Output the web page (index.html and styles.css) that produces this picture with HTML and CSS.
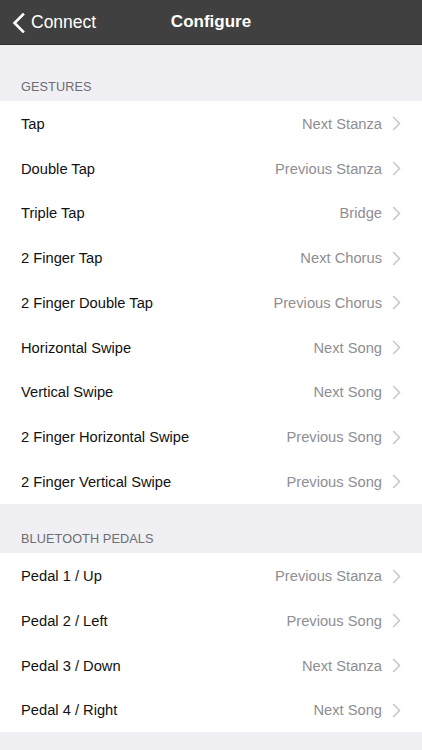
FILE: index.html
```html
<!DOCTYPE html>
<html>
<head>
<meta charset="utf-8">
<link rel="stylesheet" href="styles.css">
</head>
<body>
<div class="app">
  <header class="navbar">
    <div class="back">
      <svg class="back-icon" width="13" height="20" viewBox="0 0 13 20"><path d="M11 1.5 L2.5 10 L11 18.5" fill="none" stroke="#fff" stroke-width="2.6" stroke-linecap="square"/></svg>
      <span class="back-text">Connect</span>
    </div>
    <div class="title">Configure</div>
  </header>
  <div class="section-head first">GESTURES</div>
  <div class="group">
    <div class="row"><span class="label">Tap</span><span class="value">Next Stanza</span><svg class="chev" width="9" height="15" viewBox="0 0 9 15"><path d="M1.2 1 L7.5 7.5 L1.2 14" fill="none" stroke="#c7c7cc" stroke-width="1.6"/></svg></div>
    <div class="row"><span class="label">Double Tap</span><span class="value">Previous Stanza</span><svg class="chev" width="9" height="15" viewBox="0 0 9 15"><path d="M1.2 1 L7.5 7.5 L1.2 14" fill="none" stroke="#c7c7cc" stroke-width="1.6"/></svg></div>
    <div class="row"><span class="label">Triple Tap</span><span class="value">Bridge</span><svg class="chev" width="9" height="15" viewBox="0 0 9 15"><path d="M1.2 1 L7.5 7.5 L1.2 14" fill="none" stroke="#c7c7cc" stroke-width="1.6"/></svg></div>
    <div class="row"><span class="label">2 Finger Tap</span><span class="value">Next Chorus</span><svg class="chev" width="9" height="15" viewBox="0 0 9 15"><path d="M1.2 1 L7.5 7.5 L1.2 14" fill="none" stroke="#c7c7cc" stroke-width="1.6"/></svg></div>
    <div class="row"><span class="label">2 Finger Double Tap</span><span class="value">Previous Chorus</span><svg class="chev" width="9" height="15" viewBox="0 0 9 15"><path d="M1.2 1 L7.5 7.5 L1.2 14" fill="none" stroke="#c7c7cc" stroke-width="1.6"/></svg></div>
    <div class="row"><span class="label">Horizontal Swipe</span><span class="value">Next Song</span><svg class="chev" width="9" height="15" viewBox="0 0 9 15"><path d="M1.2 1 L7.5 7.5 L1.2 14" fill="none" stroke="#c7c7cc" stroke-width="1.6"/></svg></div>
    <div class="row"><span class="label">Vertical Swipe</span><span class="value">Next Song</span><svg class="chev" width="9" height="15" viewBox="0 0 9 15"><path d="M1.2 1 L7.5 7.5 L1.2 14" fill="none" stroke="#c7c7cc" stroke-width="1.6"/></svg></div>
    <div class="row"><span class="label">2 Finger Horizontal Swipe</span><span class="value">Previous Song</span><svg class="chev" width="9" height="15" viewBox="0 0 9 15"><path d="M1.2 1 L7.5 7.5 L1.2 14" fill="none" stroke="#c7c7cc" stroke-width="1.6"/></svg></div>
    <div class="row"><span class="label">2 Finger Vertical Swipe</span><span class="value">Previous Song</span><svg class="chev" width="9" height="15" viewBox="0 0 9 15"><path d="M1.2 1 L7.5 7.5 L1.2 14" fill="none" stroke="#c7c7cc" stroke-width="1.6"/></svg></div>
  </div>
  <div class="section-head">BLUETOOTH PEDALS</div>
  <div class="group">
    <div class="row"><span class="label">Pedal 1 / Up</span><span class="value">Previous Stanza</span><svg class="chev" width="9" height="15" viewBox="0 0 9 15"><path d="M1.2 1 L7.5 7.5 L1.2 14" fill="none" stroke="#c7c7cc" stroke-width="1.6"/></svg></div>
    <div class="row"><span class="label">Pedal 2 / Left</span><span class="value">Previous Song</span><svg class="chev" width="9" height="15" viewBox="0 0 9 15"><path d="M1.2 1 L7.5 7.5 L1.2 14" fill="none" stroke="#c7c7cc" stroke-width="1.6"/></svg></div>
    <div class="row"><span class="label">Pedal 3 / Down</span><span class="value">Next Stanza</span><svg class="chev" width="9" height="15" viewBox="0 0 9 15"><path d="M1.2 1 L7.5 7.5 L1.2 14" fill="none" stroke="#c7c7cc" stroke-width="1.6"/></svg></div>
    <div class="row"><span class="label">Pedal 4 / Right</span><span class="value">Next Song</span><svg class="chev" width="9" height="15" viewBox="0 0 9 15"><path d="M1.2 1 L7.5 7.5 L1.2 14" fill="none" stroke="#c7c7cc" stroke-width="1.6"/></svg></div>
  </div>
</div>
</body>
</html>
```
FILE: styles.css
```css
html, body {
  margin: 0;
  padding: 0;
  background: #efeff4;
}
body {
  font-family: "Liberation Sans", Arial, sans-serif;
  width: 422px;
  height: 750px;
  overflow: hidden;
}
.app {
  display: flex;
  flex-direction: column;
}
.navbar {
  height: 44px;
  background: #404040;
  border-bottom: 1px solid #2e2e2e;
  display: flex;
  align-items: center;
  position: relative;
}
.back {
  display: flex;
  align-items: center;
  padding-left: 12px;
  color: #fff;
}
.back-icon {
  display: block;
  margin-right: 6px;
  margin-top: 1px;
}
.back-text {
  font-size: 17.5px;
}
.title {
  position: absolute;
  left: 0;
  right: 0;
  text-align: center;
  color: #fff;
  font-weight: bold;
  font-size: 17px;
  pointer-events: none;
}
.section-head {
  height: 49.5px;
  box-sizing: border-box;
  padding: 0 21px 7px;
  display: flex;
  align-items: flex-end;
  font-size: 12.7px;
  color: #6d6d72;
  letter-spacing: 0.1px;
}
.section-head.first {
  height: 56px;
}
.group {
  background: #fff;
}
.row {
  height: 44.75px;
  display: flex;
  align-items: center;
  padding: 0 21px;
  font-size: 14.7px;
  padding-top: 1px;
  box-sizing: border-box;
}
.label {
  color: #111;
  flex: 1;
}
.value {
  color: #8e8e93;
  margin-right: 10px;
}
.chev {
  display: block;
}
```
